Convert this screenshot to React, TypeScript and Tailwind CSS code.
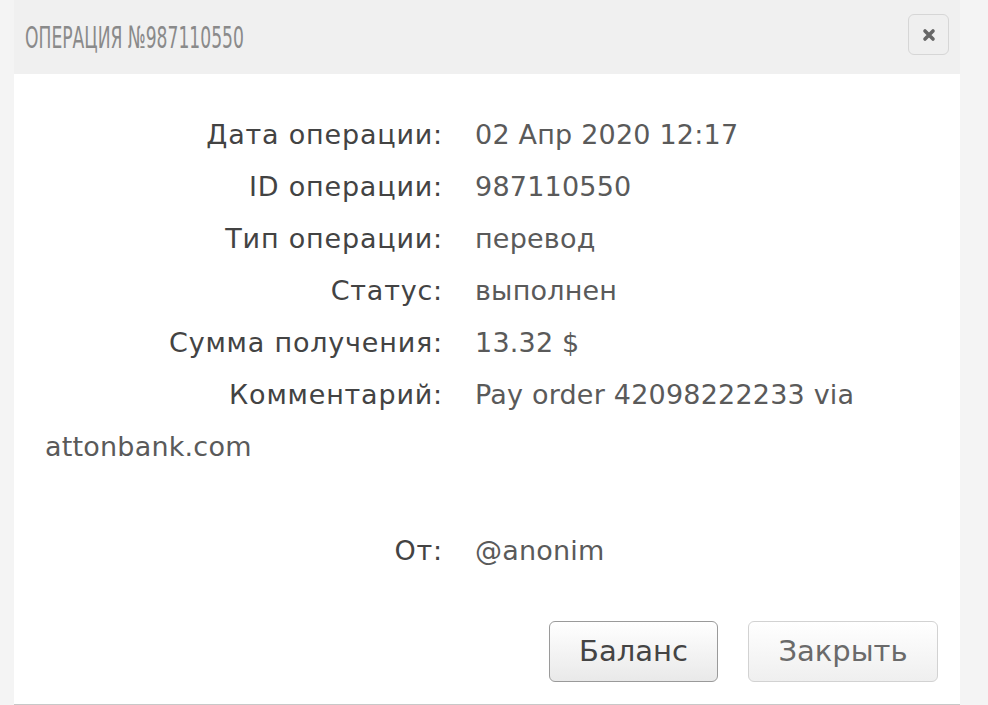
const rows: [string, string][] = [
  ["Дата операции:", "02 Апр 2020 12:17"],
  ["ID операции:", "987110550"],
  ["Тип операции:", "перевод"],
  ["Статус:", "выполнен"],
  ["Сумма получения:", "13.32 $"],
];

function Row({ label, value }: { label: string; value: string }) {
  return (
    <div className="leading-[52px]">
      <span className="inline-block w-[398px] text-right text-[#434343] tracking-[0.8px]">{label}</span>
      <span className="pl-[32px] text-[#5a5a5a]">{value}</span>
    </div>
  );
}

export default function App() {
  return (
    <div className="min-h-screen bg-[#f4f4f4] pl-[14px] pr-[28px]">
      <div className="flex flex-col bg-white border-b border-[#c8c8c8] h-[705px]">
        <div className="flex items-center justify-between h-[74px] bg-[#f0f0f0] pl-[11px] pr-[11px]">
          <h1
            className="text-[31px] text-[#8a8a8a] origin-left scale-x-[0.615] whitespace-nowrap"
            style={{ fontFamily: '"Liberation Sans Narrow", "DejaVu Sans Condensed", "DejaVu Sans", sans-serif' }}
          >
            ОПЕРАЦИЯ №987110550
          </h1>
          <button className="flex items-center justify-center w-[41px] h-[41px] mb-[5px] rounded-[6px] border border-[#d6d6d6] bg-[#efefef]">
            <svg width="14" height="14" viewBox="0 0 14 14">
              <path d="M3 3 L11 11 M11 3 L3 11" stroke="#666" strokeWidth="3.6" strokeLinecap="round" />
            </svg>
          </button>
        </div>
        <div
          className="pt-[35px] pl-[31px] text-[27px] tracking-[0.2px]"
          style={{ fontFamily: '"DejaVu Sans", "Open Sans", sans-serif' }}
        >
          {rows.map(([l, v]) => (
            <Row key={l} label={l} value={v} />
          ))}
          <div className="leading-[52px]">
            <span className="inline-block w-[398px] text-right text-[#434343] tracking-[0.8px]">Комментарий:</span>
            <span className="pl-[32px] text-[#5a5a5a]">Pay order 42098222233 via attonbank.com</span>
          </div>
          <div className="h-[52px]" />
          <Row label="От:" value="@anonim" />
        </div>
        <div
          className="flex justify-end gap-[30px] pr-[22px] mt-[44px] text-[29px]"
          style={{ fontFamily: '"DejaVu Sans", sans-serif' }}
        >
          <button className="w-[169px] h-[61px] rounded-[6px] border border-[#9a9a9a] bg-gradient-to-b from-white to-[#e9e9e9] text-[#444]">
            Баланс
          </button>
          <button className="w-[190px] h-[61px] rounded-[6px] border border-[#d2d2d2] bg-gradient-to-b from-white to-[#efefef] text-[#6a6a6a]">
            Закрыть
          </button>
        </div>
      </div>
    </div>
  );
}
